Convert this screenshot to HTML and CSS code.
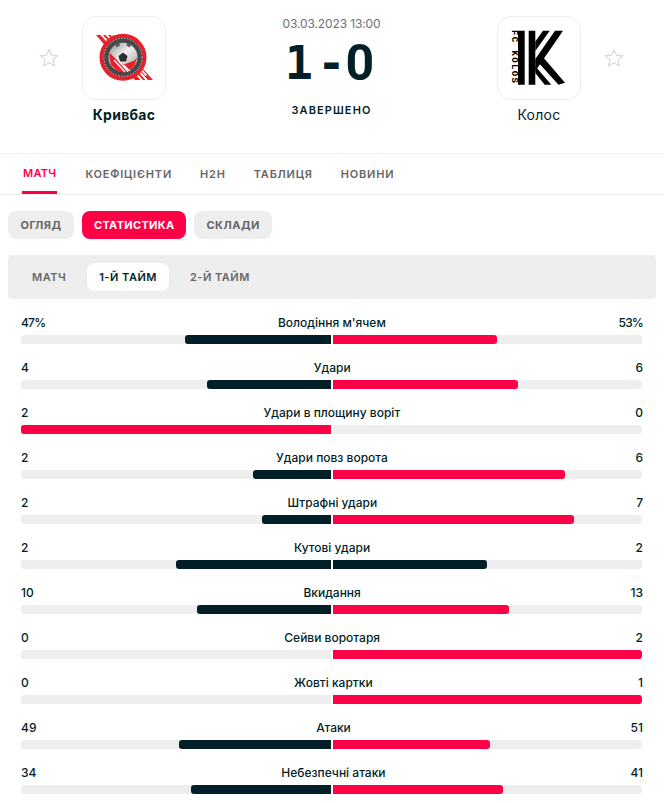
FILE: index.html
```html
<!DOCTYPE html>
<html lang="uk">
<head>
<meta charset="utf-8">
<title>Кривбас - Колос</title>
<link rel="stylesheet" href="styles.css">
</head>
<body>
<header class="match-head">
  <div class="team">
    <svg class="star" viewBox="1 1 18 18"><path d="M10 1.6l2.5 5.6 6.1.6-4.6 4.1 1.3 6-5.3-3.1-5.3 3.1 1.3-6L1.4 7.8l6.1-.6z"/></svg>
    <div class="team-col">
      <div class="logo">
        <svg viewBox="0 0 84 84" width="84" height="84">
          <defs>
            <linearGradient id="ball" x1="0" y1="0" x2="1" y2="1">
              <stop offset="0" stop-color="#8a8a8a"/>
              <stop offset=".45" stop-color="#f2f2f2"/>
              <stop offset="1" stop-color="#9a9a9a"/>
            </linearGradient>
          </defs>
          <path d="M14 19h17l40 45H53z" fill="#e8202a"/>
          <path d="M18.500 19h2.500l40 45h-2.500zM23.500 19h2.500l40 45h-2.500zM28.500 19h1.500l35 40-1.500 1z" fill="#fff"/>
          <circle cx="41" cy="41.300" r="23.500" fill="#e8202a"/>
          <circle cx="41" cy="41.300" r="19.500" fill="#48484a"/>
          <circle cx="41" cy="41.300" r="19" fill="none" stroke="#bbb" stroke-width="1" stroke-dasharray="1.500 1.500"/>
          <circle cx="41" cy="41.300" r="14.500" fill="url(#ball)"/>
          <path d="M36.500 40l4.500-3.500 4.500 3.500-1.500 5.500h-6z" fill="#2e2e30"/>
          <path d="M33 28l4-1.500 1 3-3.500 2zM45 26.500l4 1.500-1 3.500-3.500-2z" fill="#555"/>
          <path d="M27.500 36.500l10 10 4.500 2 10.500-4 2.500-3-2.500 8-6 6-5.500 1-6-1.500-6-6-1.500-6z" fill="#e8202a"/>
          <path d="M32 44l11 12M36.500 45l9.500 10.500M41.500 49l6.500 6" stroke="#fff" stroke-width="1.300" fill="none"/>
        </svg>
      </div>
      <div class="team-name team-name-win">Кривбас</div>
    </div>
  </div>
  <div class="result">
    <div class="date">03.03.2023 13:00</div>
    <div class="score"><span class="score-mono score-home">1</span><span class="score-mono">-</span><span class="score-zero">0</span></div>
    <div class="status">ЗАВЕРШЕНО</div>
  </div>
  <div class="team">
    <div class="team-col">
      <div class="logo">
        <svg viewBox="0 0 84 84" width="84" height="84">
          <text class="kolos-text" transform="rotate(90 14.500 14)" x="14.500" y="14">FC KOLOS</text>
          <path d="M21 14.700h6.700v54H21zM31.700 14.700h6.600v54h-6.600z" fill="#000"/>
          <path d="M46 14.700h6.700L38.300 35v-9.500zM58 14.700h8L38.300 55V43z" fill="#000"/>
          <path d="M45 40l23 26.700-6.500 2L40 45z" fill="#000"/>
          <path d="M38.300 50.300l16 18.400h-6.600L38.300 57z" fill="#000"/>
        </svg>
      </div>
      <div class="team-name">Колос</div>
    </div>
    <svg class="star" viewBox="1 1 18 18"><path d="M10 1.6l2.5 5.6 6.1.6-4.6 4.1 1.3 6-5.3-3.1-5.3 3.1 1.3-6L1.4 7.8l6.1-.6z"/></svg>
  </div>
</header>

<nav class="main-tabs">
  <a class="main-tab is-active">МАТЧ</a>
  <a class="main-tab">КОЕФІЦІЄНТИ</a>
  <a class="main-tab">H2H</a>
  <a class="main-tab">ТАБЛИЦЯ</a>
  <a class="main-tab">НОВИНИ</a>
</nav>

<div class="pills">
  <a class="pill">ОГЛЯД</a>
  <a class="pill is-active">СТАТИСТИКА</a>
  <a class="pill">СКЛАДИ</a>
</div>

<div class="periods">
  <a class="period">МАТЧ</a>
  <a class="period is-active">1-Й ТАЙМ</a>
  <a class="period">2-Й ТАЙМ</a>
</div>

<section class="stats">
  <div class="stat">
    <div class="stat-head"><span class="pct">47%</span><span>Володіння м'ячем</span><span class="pct">53%</span></div>
    <div class="bars"><div class="bar bar-left"><i class="fill-dark" style="width:47%"></i></div><div class="bar"><i class="fill-red" style="width:53%"></i></div></div>
  </div>
  <div class="stat">
    <div class="stat-head"><span>4</span><span>Удари</span><span>6</span></div>
    <div class="bars"><div class="bar bar-left"><i class="fill-dark" style="width:40%"></i></div><div class="bar"><i class="fill-red" style="width:60%"></i></div></div>
  </div>
  <div class="stat">
    <div class="stat-head"><span>2</span><span>Удари в площину воріт</span><span>0</span></div>
    <div class="bars"><div class="bar bar-left"><i class="fill-red" style="width:100%"></i></div><div class="bar"></div></div>
  </div>
  <div class="stat">
    <div class="stat-head"><span>2</span><span>Удари повз ворота</span><span>6</span></div>
    <div class="bars"><div class="bar bar-left"><i class="fill-dark" style="width:25%"></i></div><div class="bar"><i class="fill-red" style="width:75%"></i></div></div>
  </div>
  <div class="stat">
    <div class="stat-head"><span>2</span><span>Штрафні удари</span><span>7</span></div>
    <div class="bars"><div class="bar bar-left"><i class="fill-dark" style="width:22.2%"></i></div><div class="bar"><i class="fill-red" style="width:78%"></i></div></div>
  </div>
  <div class="stat">
    <div class="stat-head"><span>2</span><span>Кутові удари</span><span>2</span></div>
    <div class="bars"><div class="bar bar-left"><i class="fill-dark" style="width:50%"></i></div><div class="bar"><i class="fill-dark" style="width:50%"></i></div></div>
  </div>
  <div class="stat">
    <div class="stat-head"><span>10</span><span>Вкидання</span><span>13</span></div>
    <div class="bars"><div class="bar bar-left"><i class="fill-dark" style="width:43.2%"></i></div><div class="bar"><i class="fill-red" style="width:57%"></i></div></div>
  </div>
  <div class="stat">
    <div class="stat-head"><span>0</span><span>Сейви воротаря</span><span>2</span></div>
    <div class="bars"><div class="bar bar-left"></div><div class="bar"><i class="fill-red" style="width:100%"></i></div></div>
  </div>
  <div class="stat">
    <div class="stat-head"><span>0</span><span>Жовті картки</span><span>1</span></div>
    <div class="bars"><div class="bar bar-left"></div><div class="bar"><i class="fill-red" style="width:100%"></i></div></div>
  </div>
  <div class="stat">
    <div class="stat-head"><span>49</span><span>Атаки</span><span>51</span></div>
    <div class="bars"><div class="bar bar-left"><i class="fill-dark" style="width:49%"></i></div><div class="bar"><i class="fill-red" style="width:51%"></i></div></div>
  </div>
  <div class="stat">
    <div class="stat-head"><span>34</span><span>Небезпечні атаки</span><span>41</span></div>
    <div class="bars"><div class="bar bar-left"><i class="fill-dark" style="width:45%"></i></div><div class="bar"><i class="fill-red" style="width:55%"></i></div></div>
  </div>
</section>
</body>
</html>
```
FILE: styles.css
```css
* { box-sizing: border-box; }
html, body { margin: 0; padding: 0; }
body {
  width: 664px;
  height: 803px;
  overflow: hidden;
  background: #fff;
  color: #021f28;
  font-family: Inter, "Liberation Sans", sans-serif;
}
.match-head {
  height: 154px;
  display: flex;
  justify-content: space-between;
  padding: 16px 41px 0 40px;
  border-bottom: 1px solid #eee;
}
.team { display: flex; align-items: flex-start; gap: 24px; }
.team-col { display: flex; flex-direction: column; align-items: center; }
.star { width: 18px; height: 18px; margin-top: 33px; fill: none; stroke: #d9d9d9; stroke-width: 1.2; overflow: visible; }
.logo {
  width: 84px; height: 84px;
  border: 1px solid #eee;
  border-radius: 14px;
  background: #fff;
  overflow: hidden;
}
.logo svg { display: block; margin: -1px; }
.kolos-text { font: 700 9px "Liberation Mono", monospace; letter-spacing: 1.4px; fill: #000; }
.team-name { margin-top: 6px; font-size: 14px; line-height: 18px; letter-spacing: .3px; }
.team-name-win { font-weight: 700; }
.result { display: flex; flex-direction: column; align-items: center; }
.date { font-size: 12px; line-height: 16px; color: #6c7278; letter-spacing: -.12px; }
.score { margin-top: 9px; height: 44px; display: flex; align-items: center; line-height: 44px; }
.score-mono { font: 700 47px/44px "DejaVu Sans Mono", monospace; }
.score-home { margin: 0 4px 0 -4px; }
.score-zero { font: 700 50px/44px Roboto, sans-serif; }
.status { margin-top: 17px; font-size: 11px; line-height: 16px; font-weight: 600; letter-spacing: 1.1px; }
.main-tabs {
  height: 41px;
  display: flex;
  gap: 28px;
  padding: 0 23px;
  border-bottom: 1px solid #eee;
}
.main-tab {
  display: flex; align-items: center;
  height: 40px;
  font-size: 11px; font-weight: 600; letter-spacing: .8px;
  color: #666;
}
.main-tab.is-active { color: #ff0046; border-bottom: 3px solid #ff0046; padding: 0 1px; margin-left: -1px; letter-spacing: .3px; }
.pills { display: flex; gap: 8px; padding: 16px 8px; }
.pill {
  height: 28px; min-width: 66px; padding: 0 12px;
  display: flex; align-items: center; justify-content: center;
  border-radius: 8px;
  background: #eee;
  color: #666;
  font-size: 11px; font-weight: 700; letter-spacing: .5px;
}
.pill.is-active { background: #ff0046; color: #fff; letter-spacing: .3px; }
.periods {
  margin: 0 8px;
  height: 44px;
  padding: 8px 12px;
  display: flex; gap: 9px;
  border-radius: 4px;
  background: #eee;
}
.period {
  height: 28px; padding: 0 12px;
  display: flex; align-items: center;
  border-radius: 8px;
  color: #666;
  font-size: 11px; font-weight: 600; letter-spacing: .5px;
}
.period.is-active { background: #fff; color: #021f28; }
.stats { padding: 16px 22px 0 21px; }
.stat { height: 45px; }
.stat-head {
  display: flex; justify-content: space-between;
  margin-right: -1px;
  font-size: 12px; line-height: 16px; font-weight: 500;
}
.pct { letter-spacing: -.8px; }
.bars { margin-top: 4px; display: flex; gap: 2px; }
.bar { flex: 1; height: 9px; background: #eee; border-radius: 0 3px 3px 0; display: flex; }
.bar-left { justify-content: flex-end; border-radius: 3px 0 0 3px; }
.bar i { display: block; height: 100%; }
.bar-left i { border-radius: 3px 0 0 3px; }
.bar:not(.bar-left) i { border-radius: 0 3px 3px 0; }
.fill-dark { background: #021f28; }
.fill-red { background: #ff0046; }
```
